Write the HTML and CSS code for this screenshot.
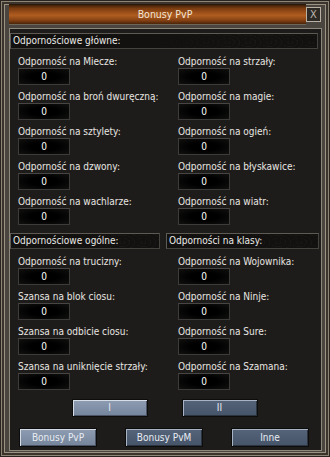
FILE: index.html
```
<!DOCTYPE html>
<html lang="pl">
<head>
<meta charset="utf-8">
<title>Bonusy PvP</title>
<link rel="stylesheet" href="styles.css">
</head>
<body>
<div class="window">
  <div class="titlebar">
    <div class="title-bar-fill"><span class="title">Bonusy PvP</span></div>
    <div class="close">X</div>
  </div>
  <div class="content">
    <div class="section-header wide">Odpornościowe główne:</div>
    <div class="fields">
      <div class="field"><div class="label">Odporność na Miecze:</div><div class="value">0</div></div>
      <div class="field"><div class="label">Odporność na strzały:</div><div class="value">0</div></div>
      <div class="field"><div class="label">Odporność na broń dwuręczną:</div><div class="value">0</div></div>
      <div class="field"><div class="label">Odporność na magie:</div><div class="value">0</div></div>
      <div class="field"><div class="label">Odporność na sztylety:</div><div class="value">0</div></div>
      <div class="field"><div class="label">Odporność na ogień:</div><div class="value">0</div></div>
      <div class="field"><div class="label">Odporność na dzwony:</div><div class="value">0</div></div>
      <div class="field"><div class="label">Odporność na błyskawice:</div><div class="value">0</div></div>
      <div class="field"><div class="label">Odporność na wachlarze:</div><div class="value">0</div></div>
      <div class="field"><div class="label">Odporność na wiatr:</div><div class="value">0</div></div>
    </div>
    <div class="header-pair">
      <div class="section-header">Odpornościowe ogólne:</div>
      <div class="section-header">Odporności na klasy:</div>
    </div>
    <div class="fields">
      <div class="field"><div class="label">Odporność na trucizny:</div><div class="value">0</div></div>
      <div class="field"><div class="label">Odporność na Wojownika:</div><div class="value">0</div></div>
      <div class="field"><div class="label">Szansa na blok ciosu:</div><div class="value">0</div></div>
      <div class="field"><div class="label">Odporność na Ninje:</div><div class="value">0</div></div>
      <div class="field"><div class="label">Szansa na odbicie ciosu:</div><div class="value">0</div></div>
      <div class="field"><div class="label">Odporność na Sure:</div><div class="value">0</div></div>
      <div class="field"><div class="label">Szansa na uniknięcie strzały:</div><div class="value">0</div></div>
      <div class="field"><div class="label">Odporność na Szamana:</div><div class="value">0</div></div>
    </div>
    <div class="pager">
      <div class="btn active">I</div>
      <div class="btn">II</div>
    </div>
    <div class="tabs">
      <div class="btn tab active">Bonusy PvP</div>
      <div class="btn tab">Bonusy PvM</div>
      <div class="btn tab">Inne</div>
    </div>
  </div>
</div>
</body>
</html>
```
FILE: styles.css
```
* { box-sizing: border-box; }
html, body { margin: 0; padding: 0; background: #000; }
body {
  font-family: "DejaVu Sans Condensed", "DejaVu Sans", sans-serif;
  font-size: 10px;
  color: #e6e4e0;
}
.window {
  width: 330px;
  height: 457px;
  padding: 3px 7px 7px 8px;
  background: #4a453e;
  border: 1px solid #2a2520;
  box-shadow: inset 0 0 0 1px #8c8474, inset 0 0 0 3px #3a342c, inset 0 0 0 4px #9a9282;
  display: flex;
  flex-direction: column;
}
.titlebar {
  height: 21px;
  display: flex;
  align-items: center;
}
.title-bar-fill {
  flex: 1;
  height: 21px;
  background: linear-gradient(to bottom, #3e1e08 0%, #7a3c10 18%, #a4541c 45%, #ae5c20 55%, #864214 80%, #4a240a 100%);
  border-top: 1px solid #2a1a0c;
  border-bottom: 1px solid #6e6658;
  display: flex;
  align-items: center;
  justify-content: center;
  padding-left: 15px;
}
.title {
  color: #f2e6d6;
  font-size: 10.5px;
  line-height: 13px;
}
.close {
  width: 15px;
  height: 15px;
  margin-right: 1px;
  background: #2e2a25;
  border: 1px solid #b8b0a2;
  color: #bdb7ad;
  font-size: 11px;
  line-height: 13px;
  text-align: center;
}
.content {
  flex: 1;
  margin-top: 3px;
  background: #1e1c1a;
  border: 1px solid #8e887c;
  padding: 4px 4px 3px 0;
  display: flex;
  flex-direction: column;
}
.section-header {
  height: 16px;
  background-color: #121110;
  background-image:
    linear-gradient(to right, #121110 0%, #121110 42%, rgba(18,17,16,0.7) 75%, rgba(18,17,16,0.7) 100%),
    repeating-radial-gradient(ellipse at 30% 60%, transparent 0 2px, rgba(70,60,48,0.45) 2px 3px, transparent 3px 5px);
  background-size: 100% 100%, 21px 14px;
  border: 1px solid #5e5a54;
  border-right-color: #46423e;
  border-bottom-color: #46423e;
  line-height: 14px;
  padding-left: 2px;
  color: #ecebe8;
}
.section-header.wide {
  width: 308px;
}
.fields {
  display: grid;
  grid-template-columns: 160px 1fr;
  row-gap: 5px;
  padding-left: 8px;
  margin-top: 6px;
}
.field {
  display: flex;
  flex-direction: column;
}
.label {
  height: 13px;
  line-height: 13px;
  white-space: nowrap;
  color: #e8e6e2;
}
.value {
  width: 52px;
  height: 17px;
  border: 1px solid #3e3c3a;
  border-top-color: #484644;
  background: radial-gradient(ellipse at 50% 50%, #000 40%, #121110 100%);
  color: #fff;
  text-align: center;
  line-height: 15px;
}
.header-pair {
  display: grid;
  grid-template-columns: 150px 153px;
  column-gap: 6px;
  margin-top: 8px;
}
.pager {
  display: flex;
  justify-content: center;
  gap: 34px;
  margin-top: 9px;
  padding-left: 2px;
}
.btn {
  width: 76px;
  height: 18px;
  border: 1px solid #0c0c0c;
  box-shadow: inset 1px 1px 0 #a8b4c4, inset -1px -1px 0 #2c3440;
  background: linear-gradient(to bottom, #56647a, #46546a);
  color: #e8ecf2;
  text-align: center;
  line-height: 16px;
}
.btn.active {
  box-shadow: inset 1px 1px 0 #d4dce6, inset -1px -1px 0 #4a5464;
  background: linear-gradient(to bottom, #8e9db2, #74849a);
}
.tabs {
  display: flex;
  justify-content: space-between;
  margin-top: 11px;
  padding-left: 9px;
  padding-right: 8px;
}
.tab {
  width: 78px;
  height: 19px;
  line-height: 17px;
}
```
